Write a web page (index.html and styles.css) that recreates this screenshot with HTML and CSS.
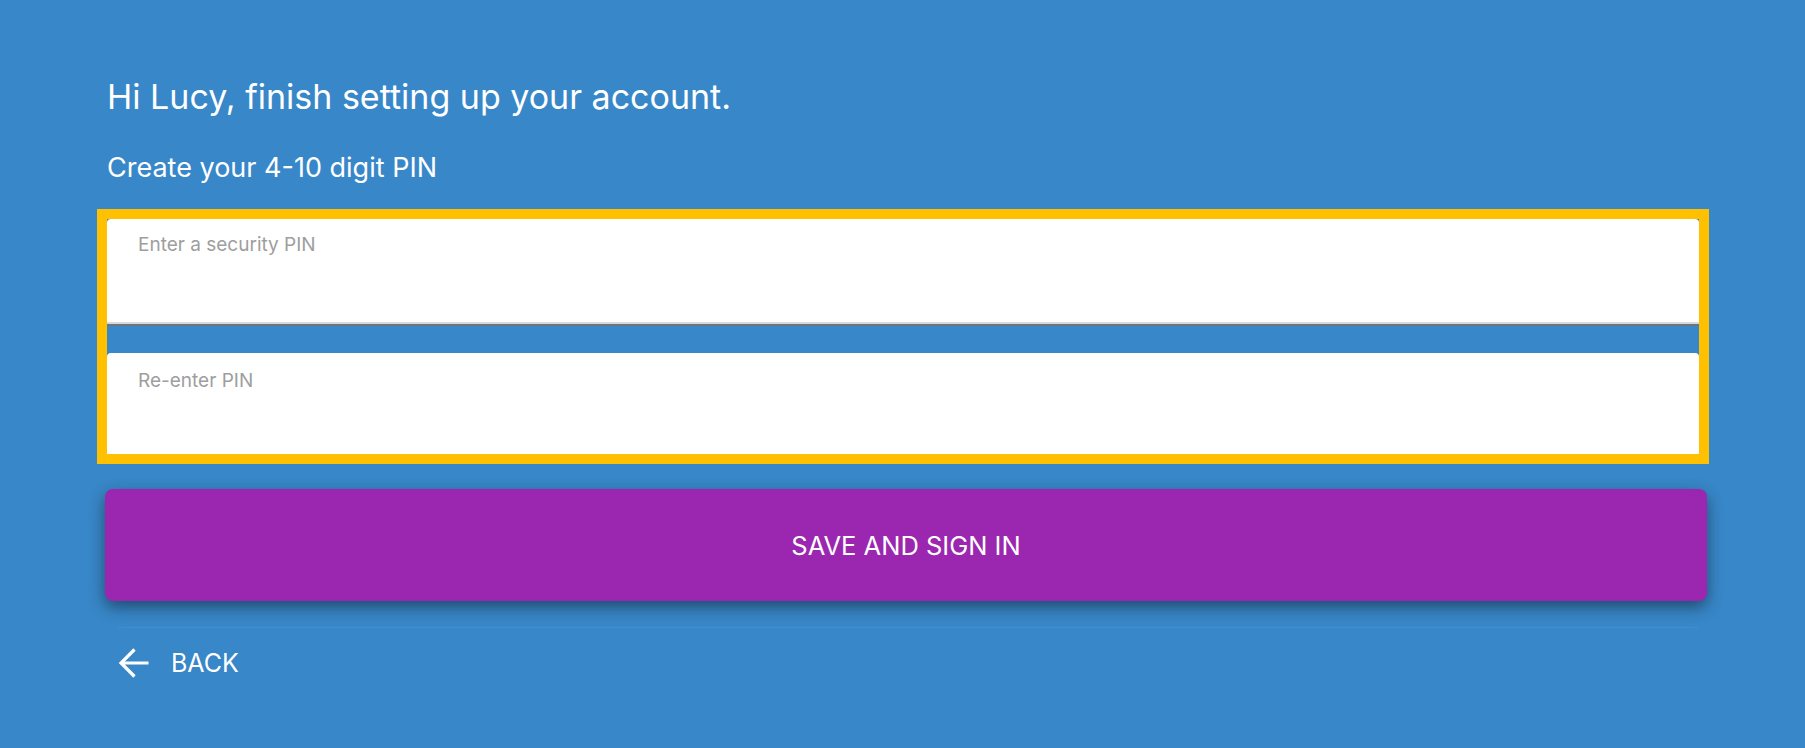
FILE: index.html
```html
<!DOCTYPE html>
<html lang="en">
<head>
<meta charset="utf-8">
<title>Finish setting up your account</title>
<link rel="stylesheet" href="styles.css">
</head>
<body>
<main class="page">
  <h1 class="title">Hi Lucy, finish setting up your account.</h1>
  <p class="subtitle">Create your 4-10 digit PIN</p>
  <form class="pin-form">
    <div class="fields">
      <label class="field field-first">
        <span class="field-label">Enter a security PIN</span>
      </label>
      <label class="field field-second">
        <span class="field-label">Re-enter PIN</span>
      </label>
    </div>
    <button type="button" class="primary-btn">SAVE AND SIGN IN</button>
    <div class="back-row">
      <button type="button" class="back-btn">
        <svg class="back-icon" viewBox="0 0 32 32" width="32" height="32" aria-hidden="true">
          <path d="M30.5 16H3M16.5 2.5L3 16l13.5 13.5" fill="none" stroke="#ffffff" stroke-width="3.2" stroke-linecap="butt" stroke-linejoin="miter"/>
        </svg>
        <span class="back-text">BACK</span>
      </button>
    </div>
  </form>
</main>
</body>
</html>
```
FILE: styles.css
```css
html, body {
  margin: 0;
  padding: 0;
  height: 100%;
  background: #3887c8;
}

body {
  font-family: Inter, Roboto, "Liberation Sans", Arial, sans-serif;
  color: #ffffff;
  overflow: hidden;
}

.page {
  padding: 77px 0 0 107px;
  width: 1592px;
}

.title {
  margin: 0;
  font-size: 34px;
  line-height: 40px;
  font-weight: 400;
}

.subtitle {
  margin: 36px 0 0 0;
  font-size: 27px;
  line-height: 30px;
  font-weight: 400;
}

.pin-form {
  margin-top: 36px;
  display: flex;
  flex-direction: column;
}

.fields {
  display: flex;
  flex-direction: column;
  gap: 27px;
  outline: 10px solid #ffc000;
}

.field {
  display: block;
  background: #ffffff;
  border-radius: 4px 4px 0 0;
  padding-left: 31px;
  box-sizing: border-box;
}

.field-first {
  height: 107px;
  padding-top: 14px;
  border-bottom: 2px solid #6f7479;
  box-shadow: inset 0 -2px 0 #d9d9d9;
}

.field-second {
  height: 101px;
  padding-top: 16px;
}

.field-label {
  display: block;
  font-size: 19px;
  line-height: 24px;
  color: #9e9e9e;
}

.primary-btn {
  margin: 35px 0 0 -2px;
  width: 1602px;
  height: 112px;
  border: none;
  border-radius: 8px;
  background: #9b27b0;
  color: #ffffff;
  font-family: Inter, Roboto, "Liberation Sans", Arial, sans-serif;
  font-size: 25.5px;
  box-shadow: 0 6px 16px rgba(0, 0, 0, 0.45);
  cursor: pointer;
}

.back-row {
  margin-top: 26px;
  border-top: 1px solid rgba(255, 255, 255, 0.05);
  padding-top: 19px;
  width: 1580px;
  margin-left: 11px;
}

.back-btn {
  display: flex;
  align-items: center;
  gap: 21px;
  background: transparent;
  border: none;
  padding: 0;
  color: #ffffff;
  font-family: Inter, Roboto, "Liberation Sans", Arial, sans-serif;
  cursor: pointer;
}

.back-icon {
  display: block;
  width: 32px;
  height: 32px;
}

.back-text {
  font-size: 25px;
  line-height: 30px;
}
```
